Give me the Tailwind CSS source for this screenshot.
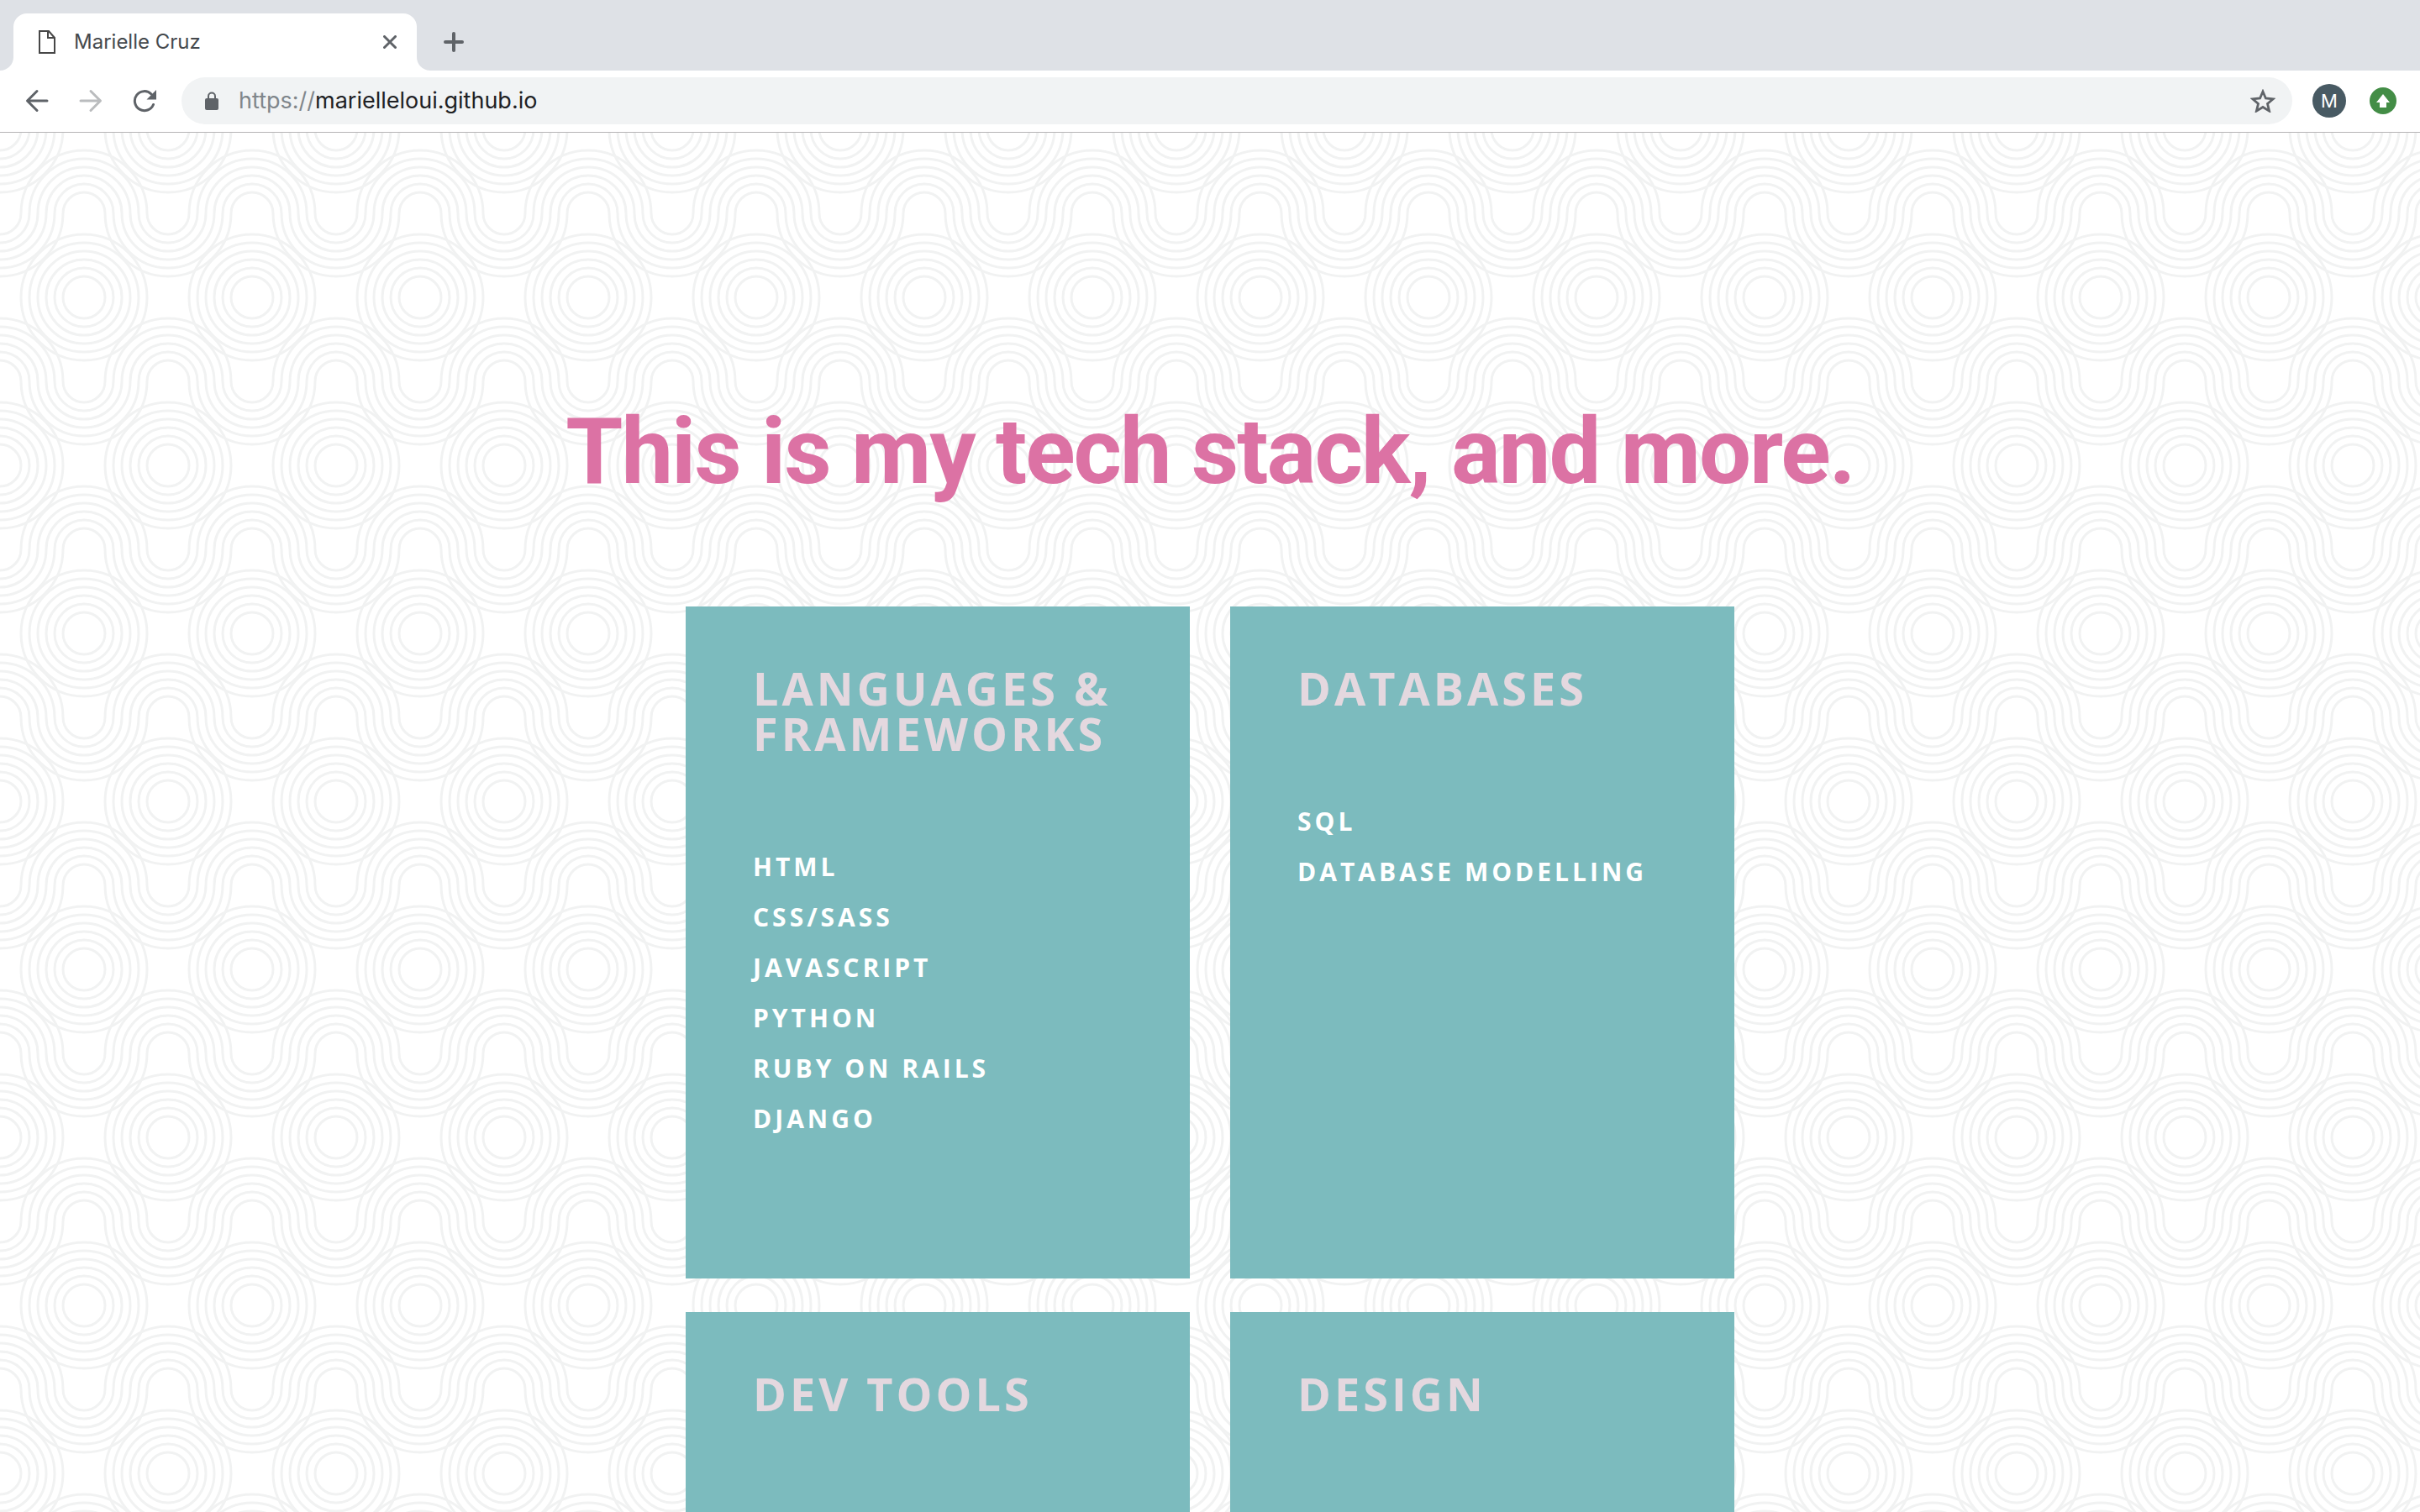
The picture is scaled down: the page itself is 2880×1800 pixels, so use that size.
<!DOCTYPE html>
<html lang="en">
<head>
<meta charset="utf-8">
<title>Marielle Cruz</title>
<script src="https://cdn.jsdelivr.net/npm/@tailwindcss/browser@4"></script>
</head>
<body class="flex h-screen flex-col overflow-hidden bg-white font-['Inter',sans-serif]">
  <header class="shrink-0 border-b border-[#b6b4b6] bg-white">
    <div class="flex h-[84px] items-end bg-[#dee1e6]">
      <svg class="size-4 shrink-0" viewBox="0 0 16 16" aria-hidden="true"><path d="M16 0v16H0A16 16 0 0 0 16 0z" fill="#fff"/></svg>
      <div class="flex h-[68px] w-[480px] items-center rounded-t-2xl bg-white pr-6 pl-[30px]">
        <svg class="h-7 w-5" viewBox="0 0 20 28" fill="none" stroke="#474747" stroke-width="2" aria-hidden="true"><path d="M1 1h11l7 8v18H1z"/><path d="M11 1v8h8"/></svg>
        <span class="ml-[22px] text-[24px] leading-8 text-[#45494d]">Marielle Cruz</span>
        <button class="ml-auto" aria-label="Close tab"><svg class="size-4" viewBox="0 0 16 16" stroke="#5f6368" stroke-width="3" stroke-linecap="round"><path d="M1.500 1.500l13 13M14.500 1.500l-13 13"/></svg></button>
      </div>
      <svg class="size-4 shrink-0" viewBox="0 0 16 16" aria-hidden="true"><path d="M0 0v16h16A16 16 0 0 1 0 0z" fill="#fff"/></svg>
      <button class="mb-[22px] ml-4" aria-label="New tab"><svg class="size-6" viewBox="0 0 24 24" stroke="#5f6368" stroke-width="4" stroke-linecap="round"><path d="M12 2v20M2 12h20"/></svg></button>
    </div>
    <div class="flex items-center pt-2 pr-7 pb-[9px] pl-[30px]">
      <button aria-label="Back"><svg class="size-7" viewBox="0 0 28 28" fill="none" stroke="#5f6368" stroke-width="3" stroke-linecap="round" stroke-linejoin="round"><path d="M14 2.500L2.500 14L14 25.500M3 14h23"/></svg></button>
      <button class="ml-9" aria-label="Forward"><svg class="size-7" viewBox="0 0 28 28" fill="none" stroke="#babcbe" stroke-width="3" stroke-linecap="round" stroke-linejoin="round"><path d="M14 2.500L25.500 14L14 25.500M25 14H2"/></svg></button>
      <button class="ml-9" aria-label="Reload"><svg class="size-7" viewBox="0 0 28 28" fill="none"><path d="M24.500 18.500A11.500 11.500 0 1 1 22 6" stroke="#5f6368" stroke-width="3" stroke-linecap="round"/><path d="M28 1v11.500H16.500z" fill="#5f6368"/></svg></button>
      <form class="ml-[30px] flex h-14 flex-1 items-center rounded-full bg-[#f1f3f4] pr-5 pl-7">
        <svg class="h-[22px] w-4" viewBox="0 0 16 22" aria-hidden="true"><rect y="8" width="16" height="14" rx="2" fill="#5f6368"/><path d="M4 9V5.500a4 4 0 0 1 8 0V9" fill="none" stroke="#5f6368" stroke-width="2"/></svg>
        <p class="ml-6 flex-1 text-[27px] leading-8 text-[#202124]"><a href="#"><span class="text-[#80868b]">https://</span>marielleloui.github.io</a></p>
        <button type="button" aria-label="Bookmark"><svg class="h-7 w-[30px]" viewBox="0 0 30 28" fill="none" stroke="#5f6368" stroke-width="2.800"><path d="M15 3l3.400 8 8.800.8-6.700 5.700 2.100 8.600-7.600-4.600-7.600 4.600 2.100-8.600-6.700-5.700 8.800-.8z"/></svg></button>
      </form>
      <button class="ml-6 size-10 rounded-full bg-[#485a63] text-[22px] text-white">M</button>
      <button class="ml-7 size-8 rounded-full bg-[#438d46]" aria-label="Update"><svg class="size-8" viewBox="0 0 32 32"><path d="M16 8l8 10h-4v6h-8v-6H8z" fill="#fff"/></svg></button>
    </div>
  </header>

  <main class="relative flex-1 overflow-hidden">
    <svg class="absolute inset-0 h-full w-full" aria-hidden="true">
      <defs>
        <g id="rings"><circle r="25"/><circle r="35"/><circle r="45"/><circle r="55"/><circle r="65"/><circle r="75"/></g>
        <g id="arch"><path d="M-25 0a25 25 0 0 1 50 0M-35 0a35 35 0 0 1 70 0M-45 0a45 45 0 0 1 90 0M-55 0a55 55 0 0 1 110 0M-65 0a65 65 0 0 1 130 0M-75 0a75 75 0 0 1 150 0"/></g>
        <g id="cup"><path d="M-25 0a25 25 0 0 0 50 0M-35 0a35 35 0 0 0 70 0M-45 0a45 45 0 0 0 90 0M-55 0a55 55 0 0 0 110 0M-65 0a65 65 0 0 0 130 0M-75 0a75 75 0 0 0 150 0"/></g>
        <pattern id="waves" y="-4" width="200" height="400" patternUnits="userSpaceOnUse">
          <g fill="none" stroke="#f1f2f2" stroke-width="3">
            <use href="#rings"/><use href="#rings" x="200"/>
            <use href="#arch" x="100" y="100"/><use href="#cup" y="100"/><use href="#cup" x="200" y="100"/>
            <use href="#rings" x="100" y="200"/>
            <use href="#cup" x="100" y="300"/><use href="#arch" y="300"/><use href="#arch" x="200" y="300"/>
            <use href="#rings" y="400"/><use href="#rings" x="200" y="400"/>
          </g>
        </pattern>
      </defs>
      <rect width="100%" height="100%" fill="url(#waves)"/>
    </svg>
    <div class="relative flex flex-col items-center pt-80 text-white">
      <h1 class="text-center font-['Roboto',sans-serif] text-[110px] leading-[120px] font-bold tracking-[-2px] text-[#dc72a4]">This is my tech stack, and more.</h1>
      <div class="mt-[124px] grid grid-cols-[600px_600px] gap-x-12 gap-y-10 font-['Open_Sans',sans-serif] font-bold uppercase">
        <section class="min-h-[800px] bg-[#7cbbbe] px-20 py-[70px]">
          <h2 class="text-[54px] leading-[54px] tracking-[4px] text-[#e4d8df]">Languages &amp; Frameworks</h2>
          <ul class="mt-[102px] text-[30px] leading-[60px] tracking-[4px]"><li>HTML</li><li>CSS/SASS</li><li>JavaScript</li><li>Python</li><li>Ruby on Rails</li><li>Django</li></ul>
        </section>
        <section class="min-h-[800px] bg-[#7cbbbe] px-20 py-[70px]">
          <h2 class="text-[54px] leading-[54px] tracking-[4px] text-[#e4d8df]">Databases</h2>
          <ul class="mt-[102px] text-[30px] leading-[60px] tracking-[4px]"><li>SQL</li><li>Database Modelling</li></ul>
        </section>
        <section class="min-h-[800px] bg-[#7cbbbe] px-20 py-[70px]">
          <h2 class="text-[54px] leading-[54px] tracking-[4px] text-[#e4d8df]">Dev Tools</h2>
        </section>
        <section class="min-h-[800px] bg-[#7cbbbe] px-20 py-[70px]">
          <h2 class="text-[54px] leading-[54px] tracking-[4px] text-[#e4d8df]">Design</h2>
        </section>
      </div>
    </div>
  </main>
</body>
</html>
